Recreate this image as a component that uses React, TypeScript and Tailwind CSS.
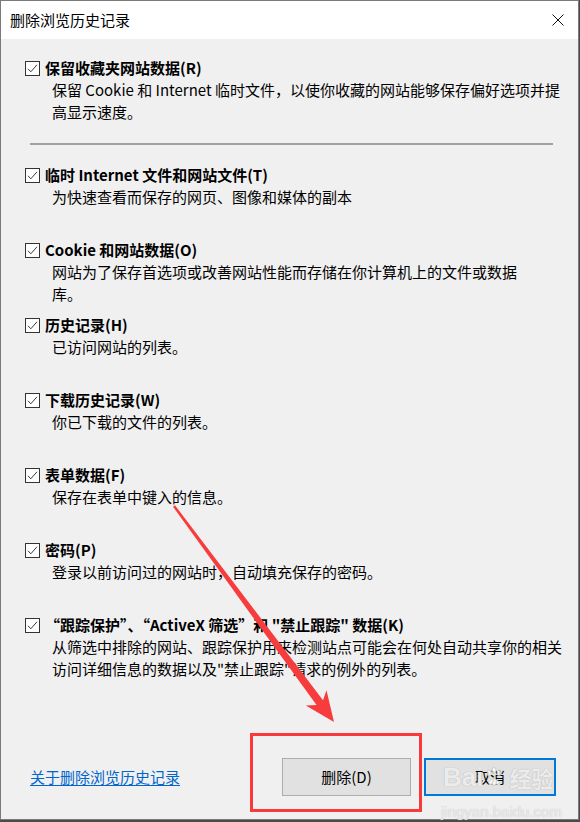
import React from "react";

type Item = { label: string; lines: string[] };

const items: Item[] = [
  { label: "临时 Internet 文件和网站文件(T)", lines: ["为快速查看而保存的网页、图像和媒体的副本"] },
  {
    label: "Cookie 和网站数据(O)",
    lines: ["网站为了保存首选项或改善网站性能而存储在你计算机上的文件或数据", "库。"],
  },
  { label: "历史记录(H)", lines: ["已访问网站的列表。"] },
  { label: "下载历史记录(W)", lines: ["你已下载的文件的列表。"] },
  { label: "表单数据(F)", lines: ["保存在表单中键入的信息。"] },
  { label: "密码(P)", lines: ["登录以前访问过的网站时，自动填充保存的密码。"] },
  {
    label: "“跟踪保护”、“ActiveX 筛选”和 \"禁止跟踪\" 数据(K)",
    lines: [
      "从筛选中排除的网站、跟踪保护用来检测站点可能会在何处自动共享你的相关",
      "访问详细信息的数据以及\"禁止跟踪\"请求的例外的列表。",
    ],
  },
];

function Check() {
  return (
    <span className="w-[15px] h-[15px] shrink-0 border border-[#333] bg-white flex items-center justify-center">
      <svg width="13" height="13" viewBox="0 0 13 13">
        <path d="M2 6.8 L4.8 9.8 L11 2.8" fill="none" stroke="#3a3a3a" strokeWidth="1" />
      </svg>
    </span>
  );
}

function Option({ item }: { item: Item }) {
  return (
    <div>
      <div className="flex items-center h-[22px] pl-[24px] gap-[5px]">
        <Check />
        <span className="font-bold whitespace-nowrap leading-[22px]">{item.label}</span>
      </div>
      {item.lines.map((l) => (
        <div key={l} className="pl-[51px] h-[22px] leading-[22px] whitespace-nowrap">
          {l}
        </div>
      ))}
    </div>
  );
}

export default function App() {
  return (
    <div
      className="w-[580px] h-[822px] bg-[#4a4a4a] text-[15px] text-black"
      style={{ fontFamily: '"Noto Sans CJK SC", "Noto Sans", sans-serif' }}
    >
      <div className="relative w-[579px] h-[820px] bg-[#f0f0f0] border border-[#7a7a7a] flex flex-col">
        {/* title bar */}
        <div className="h-[38px] bg-white flex items-center justify-between pl-[9px] pr-[14px]">
          <span>删除浏览历史记录</span>
          <svg width="12" height="12" viewBox="0 0 12 12">
            <path d="M0.5 0.5 L11.5 11.5 M11.5 0.5 L0.5 11.5" stroke="#111" strokeWidth="1" />
          </svg>
        </div>

        <div className="pt-[18px]">
          <Option
            item={{
              label: "保留收藏夹网站数据(R)",
              lines: ["保留 Cookie 和 Internet 临时文件，以使你收藏的网站能够保存偏好选项并提", "高显示速度。"],
            }}
          />
          <div className="mt-[20px] ml-[29px] w-[523px] h-[2px] bg-[#a0a0a0]" />
          <div className="mt-[19px] flex flex-col">
            {items.map((it) => (
              <div key={it.label} className="h-[75px]">
                <Option item={it} />
              </div>
            ))}
          </div>
        </div>

        {/* footer */}
        <div className="mt-[69px] flex items-center pl-[29px] pr-[22px]">
          <span className="text-[#0066cc] underline underline-offset-2 whitespace-nowrap">关于删除浏览历史记录</span>
          <div className="ml-auto flex gap-[13px]">
            <button className="w-[129px] h-[38px] bg-[#e1e1e1] border border-[#adadad]">删除(D)</button>
            <button className="w-[132px] h-[38px] bg-[#e1e1e1] border-2 border-[#0078d7]">取消</button>
          </div>
        </div>

        {/* watermark */}
        <div className="absolute left-[442px] top-[763px] flex items-center gap-[2px] text-white/80 pointer-events-none [text-shadow:0_0_1px_#9a9a9a]">
          <span className="text-[26px] font-bold leading-none" style={{ fontFamily: '"Liberation Sans", sans-serif' }}>
            Bai
          </span>
          <svg width="18" height="20" viewBox="0 0 18 20" className="opacity-80">
            <ellipse cx="4" cy="6" rx="2" ry="3" fill="#fff" stroke="#aaa" strokeWidth="0.6" />
            <ellipse cx="9" cy="3.5" rx="2" ry="3" fill="#fff" stroke="#aaa" strokeWidth="0.6" />
            <ellipse cx="14" cy="6" rx="2" ry="3" fill="#fff" stroke="#aaa" strokeWidth="0.6" />
            <path d="M3 16 Q9 7 15 16 Q9 20 3 16 Z" fill="#fff" stroke="#aaa" strokeWidth="0.6" />
          </svg>
          <span className="text-[22px] font-bold leading-none ml-[4px]">经验</span>
        </div>
        <div
          className="absolute left-[440px] top-[803px] text-[15px] leading-none text-white/70 [text-shadow:0_0_1px_#b0b0b0] pointer-events-none"
          style={{ fontFamily: '"Liberation Sans", sans-serif' }}
        >
          jingyan.baidu.com
        </div>

        {/* annotation: red box */}
        <div className="absolute left-[249px] top-[732px] w-[172px] h-[79px] border-[3px] border-[#fa3a3a] pointer-events-none" />
      </div>

      {/* annotation: red arrow */}
      <svg className="absolute left-0 top-0 pointer-events-none" width="580" height="822">
        <polygon
          points="175,505.3 323,700.2 326.5,690.3 334,722 305.8,705.5 316.5,705 173,506.7"
          fill="#f63c3c"
        />
      </svg>
    </div>
  );
}
